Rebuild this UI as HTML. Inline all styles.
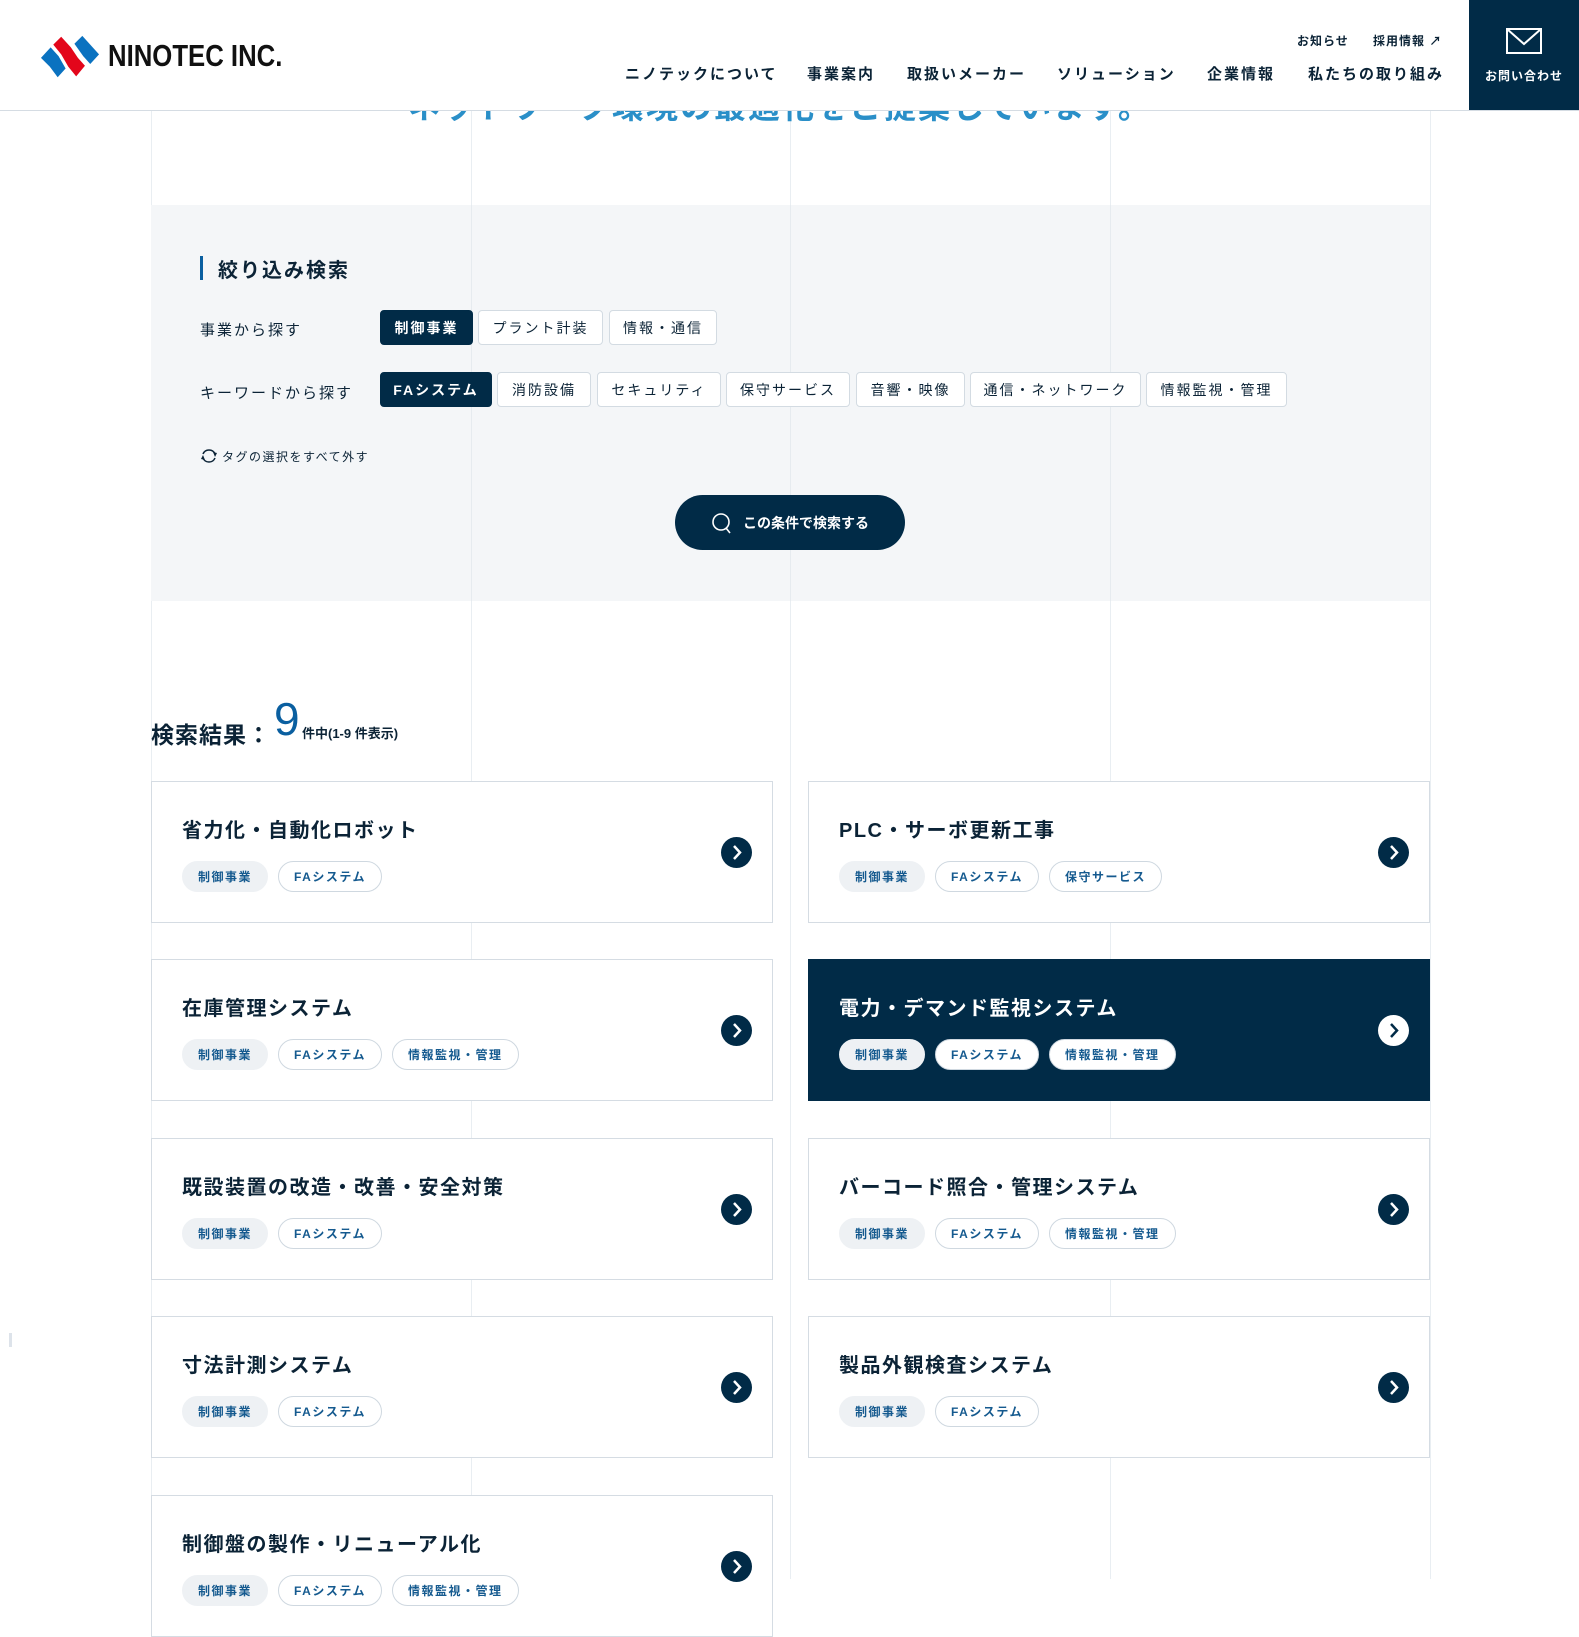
<!DOCTYPE html>
<html><head><meta charset="utf-8">
<style>
*{margin:0;padding:0;box-sizing:border-box}
body{width:1579px;height:1579px;overflow:hidden;background:#fff;position:relative;font-family:"Liberation Sans","Noto Sans CJK JP",sans-serif;color:#0b2336}
.a{position:absolute}
.vl{position:absolute;top:110px;height:1469px;width:1px;background:#e9eef2}
.hdr{position:absolute;left:0;top:0;width:1579px;height:111px;background:#fff;border-bottom:1px solid #d5dce3;z-index:5}
.nav{position:absolute;top:63px;font-size:15px;font-weight:bold;letter-spacing:2px;color:#0b2336;white-space:nowrap}
.sm{position:absolute;top:32px;font-size:12px;font-weight:bold;letter-spacing:1px;white-space:nowrap}
.btn{position:absolute;height:35px;border:1px solid #d3dbe2;background:#fff;border-radius:4px;font-size:14px;letter-spacing:2px;display:flex;align-items:center;justify-content:center;color:#0b2336;white-space:nowrap}
.btn.on{background:#012b47;border-color:#012b47;color:#fff;font-weight:bold}
.card{position:absolute;width:622px;height:142px;border:1px solid #d5dce3;background:#fff}
.card.dk{background:#012b47;border-color:#012b47}
.ct{position:absolute;left:30px;top:32px;font-size:20px;font-weight:bold;letter-spacing:1.5px;color:#0b2336;white-space:nowrap}
.dk .ct{color:#fff}
.tags{position:absolute;left:30px;top:79px;display:flex;gap:10px}
.tg{height:31px;border-radius:16px;border:1px solid #cfd8e0;background:#fff;font-size:12px;font-weight:bold;letter-spacing:1.5px;color:#155a8f;padding:0 15px;display:flex;align-items:center}
.tg.g{background:#eef1f4;border-color:#eef1f4}
.arr{position:absolute;right:20px;top:55px;width:31px;height:31px;border-radius:50%;background:#012b47}
.dk .arr{background:#fff}
.arr svg{position:absolute;left:0;top:0}
</style></head><body>

<div class="vl" style="left:151px"></div>
<div class="vl" style="left:471px"></div>
<div class="vl" style="left:790px"></div>
<div class="vl" style="left:1110px"></div>
<div class="vl" style="left:1430px"></div>

<div class="a" style="left:408px;top:82px;font-size:32px;font-weight:bold;color:#2a8fc8;letter-spacing:2px;white-space:nowrap">ネットワーク環境の最適化をご提案しています。</div>

<div class="hdr">
 <svg class="a" style="left:39px;top:35px" width="62" height="44" viewBox="0 0 70 50">
  <polygon points="2,26 13,14 22,24 30,38 21,48 12,36" fill="#0a72c0"/>
  <polygon points="16,11 25,2 36,14 44,26 52,35 42,47 33,36 25,22" fill="#e3061b"/>
  <polygon points="40,10 49,1 68,22 58,33 50,24" fill="#0a72c0"/>
 </svg>
 <div class="a" style="left:108px;top:38px;font-size:31px;font-weight:bold;letter-spacing:0px;transform:scaleX(0.83);transform-origin:left;color:#111;white-space:nowrap">NINOTEC INC.</div>
 <div class="sm" style="left:1297px">お知らせ</div>
 <div class="sm" style="left:1373px">採用情報 ↗</div>
 <div class="nav" style="left:625px">ニノテックについて</div>
 <div class="nav" style="left:807px">事業案内</div>
 <div class="nav" style="left:907px">取扱いメーカー</div>
 <div class="nav" style="left:1057px">ソリューション</div>
 <div class="nav" style="left:1207px">企業情報</div>
 <div class="nav" style="left:1308px">私たちの取り組み</div>
 <div class="a" style="left:1469px;top:0;width:110px;height:110px;background:#012b47">
  <svg class="a" style="left:37px;top:28px" width="36" height="26" viewBox="0 0 36 26"><rect x="1" y="1" width="34" height="24" fill="none" stroke="#fff" stroke-width="2"/><polyline points="1,1 18,16 35,1" fill="none" stroke="#fff" stroke-width="2"/></svg>
  <div class="a" style="left:0;width:110px;top:67px;text-align:center;color:#fff;font-size:12px;font-weight:bold;letter-spacing:1px">お問い合わせ</div>
 </div>
</div>

<div class="a" style="left:151px;top:205px;width:1279px;height:396px;background:#f4f6f8"></div>
<div class="vl" style="left:471px;top:205px;height:396px;background:#e6ebef"></div>
<div class="vl" style="left:790px;top:205px;height:396px;background:#e6ebef"></div>
<div class="vl" style="left:1110px;top:205px;height:396px;background:#e6ebef"></div>
<div class="a" style="left:200px;top:256px;width:3px;height:24px;background:#0a5fa0"></div>
<div class="a" style="left:218px;top:254px;font-size:20px;font-weight:bold;letter-spacing:2px">絞り込み検索</div>
<div class="a" style="left:200px;top:319px;font-size:15px;letter-spacing:2px">事業から探す</div>
<div class="a" style="left:200px;top:382px;font-size:15px;letter-spacing:2px">キーワードから探す</div>
<div class="btn on" style="left:380px;top:310px;width:93px">制御事業</div>
<div class="btn" style="left:478px;top:310px;width:125px">プラント計装</div>
<div class="btn" style="left:609px;top:310px;width:108px">情報・通信</div>
<div class="btn on" style="left:380px;top:372px;width:112px">FAシステム</div>
<div class="btn" style="left:497px;top:372px;width:94px">消防設備</div>
<div class="btn" style="left:597px;top:372px;width:124px">セキュリティ</div>
<div class="btn" style="left:726px;top:372px;width:124px">保守サービス</div>
<div class="btn" style="left:856px;top:372px;width:109px">音響・映像</div>
<div class="btn" style="left:970px;top:372px;width:171px">通信・ネットワーク</div>
<div class="btn" style="left:1146px;top:372px;width:141px">情報監視・管理</div>
<svg class="a" style="left:200px;top:448px" width="18" height="16" viewBox="0 0 18 16"><path d="M3 6 A6.5 6.5 0 0 1 15 6" fill="none" stroke="#0b2336" stroke-width="1.5"/><path d="M15 10 A6.5 6.5 0 0 1 3 10" fill="none" stroke="#0b2336" stroke-width="1.5"/><polygon points="13,4 17,5 15,9" fill="#0b2336"/><polygon points="5,12 1,11 3,7" fill="#0b2336"/></svg>
<div class="a" style="left:222px;top:448px;font-size:12px;letter-spacing:1.5px">タグの選択をすべて外す</div>
<div class="a" style="left:675px;top:495px;width:230px;height:55px;border-radius:28px;background:#012b47;color:#fff;font-size:14px;font-weight:bold;display:flex;align-items:center;justify-content:center;gap:10px">
 <svg width="22" height="22" viewBox="0 0 22 22"><circle cx="10" cy="10" r="8" fill="none" stroke="#fff" stroke-width="1.6"/><line x1="15" y1="16" x2="19" y2="21" stroke="#fff" stroke-width="1.6"/></svg>この条件で検索する</div>

<div class="a" style="left:151px;top:716px;font-size:23px;font-weight:bold;letter-spacing:1px;white-space:nowrap">検索結果：</div>
<div class="a" style="left:274px;top:694px;font-size:46px;color:#0a5fa0;line-height:50px">9</div>
<div class="a" style="left:302px;top:723px;font-size:13px;font-weight:bold;white-space:nowrap">件中(1-9 件表示)</div>

<div class="card" style="left:151px;top:781px"><div class="ct">省力化・自動化ロボット</div><div class="tags"><div class="tg g">制御事業</div><div class="tg">FAシステム</div></div><div class="arr"><svg width="31" height="31"><polyline points="13,9 19,15.5 13,22" fill="none" stroke="#fff" stroke-width="2.5"/></svg></div></div>
<div class="card" style="left:808px;top:781px"><div class="ct">PLC・サーボ更新工事</div><div class="tags"><div class="tg g">制御事業</div><div class="tg">FAシステム</div><div class="tg">保守サービス</div></div><div class="arr"><svg width="31" height="31"><polyline points="13,9 19,15.5 13,22" fill="none" stroke="#fff" stroke-width="2.5"/></svg></div></div>
<div class="card" style="left:151px;top:959px"><div class="ct">在庫管理システム</div><div class="tags"><div class="tg g">制御事業</div><div class="tg">FAシステム</div><div class="tg">情報監視・管理</div></div><div class="arr"><svg width="31" height="31"><polyline points="13,9 19,15.5 13,22" fill="none" stroke="#fff" stroke-width="2.5"/></svg></div></div>
<div class="card dk" style="left:808px;top:959px"><div class="ct">電力・デマンド監視システム</div><div class="tags"><div class="tg g">制御事業</div><div class="tg">FAシステム</div><div class="tg">情報監視・管理</div></div><div class="arr"><svg width="31" height="31"><polyline points="13,9 19,15.5 13,22" fill="none" stroke="#012b47" stroke-width="2.5"/></svg></div></div>
<div class="card" style="left:151px;top:1138px"><div class="ct">既設装置の改造・改善・安全対策</div><div class="tags"><div class="tg g">制御事業</div><div class="tg">FAシステム</div></div><div class="arr"><svg width="31" height="31"><polyline points="13,9 19,15.5 13,22" fill="none" stroke="#fff" stroke-width="2.5"/></svg></div></div>
<div class="card" style="left:808px;top:1138px"><div class="ct">バーコード照合・管理システム</div><div class="tags"><div class="tg g">制御事業</div><div class="tg">FAシステム</div><div class="tg">情報監視・管理</div></div><div class="arr"><svg width="31" height="31"><polyline points="13,9 19,15.5 13,22" fill="none" stroke="#fff" stroke-width="2.5"/></svg></div></div>
<div class="card" style="left:151px;top:1316px"><div class="ct">寸法計測システム</div><div class="tags"><div class="tg g">制御事業</div><div class="tg">FAシステム</div></div><div class="arr"><svg width="31" height="31"><polyline points="13,9 19,15.5 13,22" fill="none" stroke="#fff" stroke-width="2.5"/></svg></div></div>
<div class="card" style="left:808px;top:1316px"><div class="ct">製品外観検査システム</div><div class="tags"><div class="tg g">制御事業</div><div class="tg">FAシステム</div></div><div class="arr"><svg width="31" height="31"><polyline points="13,9 19,15.5 13,22" fill="none" stroke="#fff" stroke-width="2.5"/></svg></div></div>
<div class="card" style="left:151px;top:1495px"><div class="ct">制御盤の製作・リニューアル化</div><div class="tags"><div class="tg g">制御事業</div><div class="tg">FAシステム</div><div class="tg">情報監視・管理</div></div><div class="arr"><svg width="31" height="31"><polyline points="13,9 19,15.5 13,22" fill="none" stroke="#fff" stroke-width="2.5"/></svg></div></div>

<div class="a" style="left:9px;top:1333px;width:3px;height:14px;background:#dde3ea"></div>
</body></html>
